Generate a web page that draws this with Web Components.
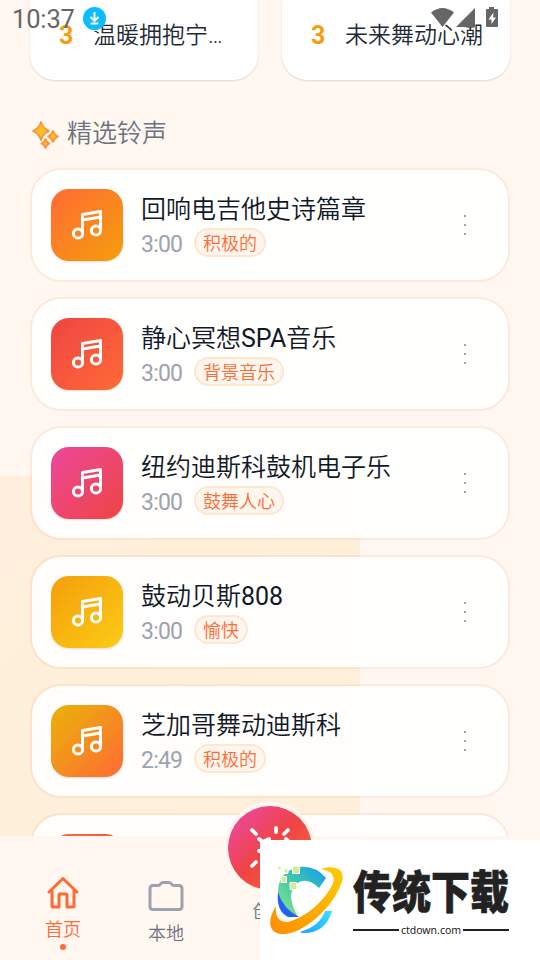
<!DOCTYPE html>
<html lang="zh-CN">
<head>
<meta charset="utf-8">
<title>精选铃声</title>
<style>
html,body{margin:0;width:540px;height:960px;overflow:hidden;background:#fff7f0}
body{font-family:Roboto,"Noto Sans CJK SC",sans-serif}
.latin{font-weight:400}
</style>
</head>
<body>
<ringtone-app></ringtone-app>
<script>
const define = (name, html, fill) => {
  const t = document.createElement('template');
  t.innerHTML = html;
  customElements.define(name, class extends HTMLElement {
    connectedCallback() {
      if (this.shadowRoot) return;
      this.attachShadow({mode: 'open'}).append(t.content.cloneNode(true));
      if (fill) fill(this, this.shadowRoot);
    }
  });
};

define('status-bar', `
<style>
:host{display:flex;position:absolute;inset:0 0 auto 0;height:36px;z-index:5;padding:0 41px 0 12px;box-sizing:border-box;color:#666}
.time{font-size:25.5px;line-height:39px;width:71px;letter-spacing:-.15px}
.dl{margin-top:7px}
.right{margin-left:auto;margin-top:7px}
</style>
<span class="time">10:37</span>
<svg class="dl" width="23" height="23" viewBox="0 0 23 23"><circle cx="11.5" cy="11.5" r="11.5" fill="#0bbcff"/><path d="M11.5 5v8.5M7.5 10l4 4 4-4M7.500 16.500h8" fill="none" stroke="#fff" stroke-width="1.9"/></svg>
<svg class="right" width="68" height="22" viewBox="0 0 68 22" fill="#666"><path d="M0 5.500Q11.500-3.500 23 5.500L11.500 20Z"/><path d="M44 1v19H25Z"/><path d="M58 0h5v2h3q1 0 1 1v16q0 1-1 1H56q-1 0-1-1V3q0-1 1-1h2z"/><path d="M62.500 5.500l-5 7h3V17l4.500-6.500h-3z" fill="#fff"/></svg>
`);

define('rank-card', `
<style>
:host{display:flex;box-sizing:border-box;width:228px;height:80px;padding:19px 24px 0 29px;background:#fff;border-radius:0 0 25px 25px;box-shadow:0 1px 2px #0002;font-size:23px;font-weight:350;line-height:34px;color:#1f2937;white-space:nowrap}
b{width:34px;font-size:25px;color:#f59e0b}
</style><b>3</b><span><slot></slot></span>`);

define('section-title', `
<style>:host{display:flex;align-items:center;gap:7px;height:36px;padding-left:31px;font-size:25px;line-height:36px;font-weight:350;color:#6b7280}
svg{margin-top:1px}</style>
<svg width="29" height="30" viewBox="0 0 29 30" fill="#fbbf24" stroke="#fb923c" stroke-width="1.800" stroke-linejoin="round"><path d="M10 2q2 6.500 8 9-6 2.500-8 9Q8 13.500 2 11q6-2.500 8-9z"/><path d="M22 11q1.200 4 5 5.500-3.800 1.500-5 5.500-1.200-4-5-5.500 3.800-1.500 5-5.500z"/><path d="M14.500 19q1 3.500 4 4.500-3 1-4 4.500-1-3.500-4-4.500 3-1 4-4.500z"/></svg>
<slot></slot>`);

define('music-cover', `
<style>:host{display:grid;place-items:center;width:72px;height:72px;border-radius:18px;background:linear-gradient(135deg,var(--from),var(--to));box-shadow:0 1px 2px #0002}
svg{margin-top:2px}</style>
<svg width="34" height="34" viewBox="0 0 34 34" fill="none" stroke="#fff" stroke-width="3" stroke-linejoin="round"><circle cx="8" cy="24.500" r="4.600"/><circle cx="26" cy="21.500" r="4.600"/><path d="M12.500 24.500V5.500L30.500 2.500v19M12.500 11L30.500 8"/></svg>`);

define('tone-card', `
<style>
:host{display:flex;align-items:flex-start;box-sizing:border-box;width:480px;height:114px;padding:19px;border:2px solid #ff6b351a;border-radius:31px;background:#ffffffea;background-clip:padding-box}
.info{margin-left:18px;flex:1}
.title{display:block;padding-top:2px;font-size:25px;font-weight:350;line-height:38px;color:#111827;white-space:nowrap}
.meta{display:flex;gap:12px;height:29px;align-items:flex-start;margin-top:-1px}
.time{font-size:23px;line-height:34px;color:#9ca3af;width:41px;letter-spacing:-.8px}
.tag{box-sizing:border-box;height:29px;padding:0 7px;border:2px solid #ffe7cf;border-radius:15px;background:#fff6ee;color:#ff6b35;font-size:18px;font-weight:350;line-height:27px}
.more{display:flex;flex-direction:column;gap:7px;margin:26px 23px 0 0}
.more i{width:2.400px;height:2px;background:#9ca3af}
</style>
<music-cover></music-cover>
<div class="info"><span class="title"><slot></slot></span><div class="meta"><span class="time"></span><span class="tag"></span></div></div>
<div class="more"><i></i><i></i><i></i></div>`, (h, r) => {
  r.querySelector('.time').textContent = h.getAttribute('time');
  r.querySelector('.tag').textContent = h.getAttribute('tag');
  if (!h.hasAttribute('tag')) r.querySelector('.info').remove();
});

define('nav-item', `
<style>:host{display:flex;flex-direction:column;align-items:center;width:103px;box-sizing:border-box;font-size:18px;font-weight:350;line-height:26px;color:var(--c,#6b7280)}
</style><slot name="icon"></slot><slot></slot><slot name="dot"></slot>`);

define('bottom-nav', `
<style>
:host{display:flex;position:absolute;left:0;right:0;bottom:0;height:124px;background:#fff7f0;padding-left:11.500px;box-sizing:border-box;z-index:2}
.home{--c:#ff6b35;padding-top:40px}.local{padding-top:42px}.create{padding-top:63px;width:106px}
.dot{width:6px;height:6px;border-radius:50%;background:#ff6b35;margin-top:1px}
.home svg{margin-bottom:7px}.local svg{margin-bottom:9px}
.fab{position:absolute;left:224px;top:-34px}
</style>
<nav-item class="home"><svg slot="icon" width="34" height="34" viewBox="0 0 34 34" fill="none" stroke="#ff6b35" stroke-width="3" stroke-linejoin="round" stroke-linecap="round"><path d="M3 16L17 2.500 31 16M6 14v16q0 1 1 1h6V19q0-1 1-1h6q1 0 1 1v12h6q1 0 1-1V14"/></svg>首页<i slot="dot" class="dot"></i></nav-item>
<nav-item class="local"><svg slot="icon" width="36" height="34" viewBox="0 0 36 34" fill="none" stroke="#9ca3af" stroke-width="3" stroke-linejoin="round"><path d="M5 7.500h5q1.500 0 2.500-1.500t3-1.500h5q2 0 3 1.500t2.500 1.500h5q3 0 3 3v18q0 3-3 3H5q-3 0-3-3v-18q0-3 3-3z"/></svg>本地</nav-item>
<nav-item class="create">创作</nav-item>
<svg class="fab" width="92" height="92" viewBox="0 0 92 92"><defs><linearGradient id="g" x1="0" y1="0" x2="1" y2="1"><stop offset=".1" stop-color="#ec4899"/><stop offset=".5" stop-color="#ef4444"/><stop offset=".9" stop-color="#ff6b35"/></linearGradient></defs><circle cx="46" cy="46" r="46" fill="#fff7f0"/><circle cx="46" cy="46" r="42" fill="url(#g)"/><path d="M28 28l4 4M52 26v4M64 28l-4 4M28 64l4-4" stroke="#fff" stroke-width="3.800" stroke-linecap="round"/><path d="M35 37l4 3 6-3M35 49h4M62 37l3 3" fill="none" stroke="#fff" stroke-width="4" stroke-linecap="round"/></svg>
`);

define('site-mark', `
<style>
:host{display:flex;position:absolute;right:0;bottom:0;width:280px;height:120px;background:#fff;z-index:6;box-sizing:border-box;padding:20px 0 0 8px;color:#222}
.words{margin-left:8px;width:158px}
.name{display:block;height:60px;font:900 39px/59px "Noto Sans CJK SC",sans-serif;transform:scaleY(1.160);white-space:nowrap;-webkit-text-stroke:.6px #222}
.site{display:flex;align-items:center;font:10.500px/16px "Noto Sans",sans-serif;gap:2px;margin-top:2px;width:156px}
.site i{flex:1;height:2px;background:#222}
</style>
<svg width="77" height="82" viewBox="268 860 77 82"><defs><linearGradient id="o" x1="0" y1="1" x2="1" y2="0"><stop stop-color="#ff8c00"/><stop offset="1" stop-color="#ffcc00"/></linearGradient><linearGradient id="c" x1="0" y1="1" x2="1" y2="0"><stop stop-color="#92e67c"/><stop offset=".5" stop-color="#3fc9ad"/><stop offset="1" stop-color="#149bf0"/></linearGradient><linearGradient id="b" x1="0" y1="1" x2="1" y2="0"><stop stop-color="#1aa3ff"/><stop offset="1" stop-color="#3de0ff"/></linearGradient></defs>
<path d="M326 878Q315 865 299 867 277 872 278 894 282 911 298 917 286 896 295 885 306 875 319 888Z" fill="url(#c)"/><path d="M278 892Q276 911 288 917L299 917Q283 909 278 892Z" fill="#2462f2"/><path d="M300 932Q320 926 325 911H332Q325 934 302 933Z" fill="url(#b)"/><path d="M321 869C336 864 347 870 341 884C332 909 302 935 282 934C268 933 267 920 276 906C275 916 278 922 288 922C305 918 326 900 333 883Q337 872 321 869Z" fill="url(#o)"/><path d="M276 862h12v12h-12z" fill="#fff"/><path d="M278 866h3v4h-3zM284 869h4v4h-4zM292.500 866h7v7.500h-7zM281 876.500h5.500v6H281zM290 882.500h6.500v7H290z" fill="#d0ee91" stroke="#fff"/></svg>
<div class="words"><span class="name">传统下载</span><div class="site"><i></i><span>ctdown.com</span><i></i></div></div>`);

define('ringtone-app', `
<style>
:host{display:block;position:relative;width:540px;height:960px;overflow:hidden;background:#fff7f0}
.glow{position:absolute;left:0;top:476px;width:360px;height:484px;background:linear-gradient(135deg,#ffefdc,#fdf0da)}
.page{position:relative}
.ranks{display:flex;gap:24px;padding-left:30px}
section-title{margin-top:36px}
.list{display:flex;flex-direction:column;align-items:center;gap:15px;margin-top:16px}
.latin{font-weight:400}
</style>
<div class="glow"></div><status-bar></status-bar>
<div class="page"><div class="ranks"><rank-card>温暖拥抱宁…</rank-card><rank-card>未来舞动心潮</rank-card></div>
<section-title>精选铃声</section-title>
<div class="list">
<tone-card time="3:00" tag="积极的" style="--from:#ff6b35;--to:#f59e0b">回响电吉他史诗篇章</tone-card>
<tone-card time="3:00" tag="背景音乐" style="--from:#ef4444;--to:#ff6b35">静心冥想<span class="latin">SPA</span>音乐</tone-card>
<tone-card time="3:00" tag="鼓舞人心" style="--from:#ec4899;--to:#ef4444">纽约迪斯科鼓机电子乐</tone-card>
<tone-card time="3:00" tag="愉快" style="--from:#f59e0b;--to:#facc15">鼓动贝斯<span class="latin">808</span></tone-card>
<tone-card time="2:49" tag="积极的" style="--from:#eab308;--to:#ff6b35">芝加哥舞动迪斯科</tone-card>
<tone-card style="--from:#ff6b35;--to:#ef4444"></tone-card>
</div></div>
<bottom-nav></bottom-nav><site-mark></site-mark>`);
</script>
</body>
</html>
